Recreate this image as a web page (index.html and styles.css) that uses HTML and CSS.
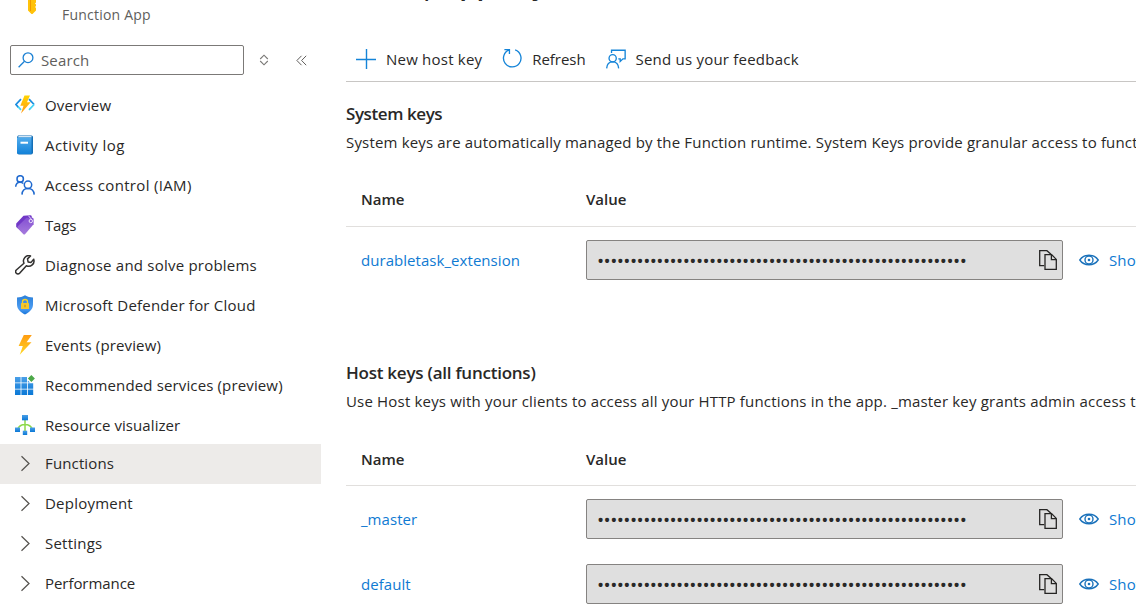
FILE: index.html
```html
<!DOCTYPE html>
<html lang="en">
<head>
<meta charset="utf-8">
<title>App keys</title>
<link rel="stylesheet" href="styles.css">
</head>
<body>
<svg class="defs" width="0" height="0" aria-hidden="true">
  <defs>
    <linearGradient id="blue" x1="0" y1="0" x2="0" y2="1"><stop offset="0" stop-color="#4a9fe8"/><stop offset="1" stop-color="#0a78d6"/></linearGradient>
    <linearGradient id="book" x1="0" y1="0" x2="0" y2="1"><stop offset="0" stop-color="#50abec"/><stop offset="1" stop-color="#1382d8"/></linearGradient>
    <linearGradient id="bolt" x1="0" y1="0" x2="0" y2="1"><stop offset="0" stop-color="#ff9c12"/><stop offset=".5" stop-color="#ffb818"/><stop offset="1" stop-color="#ffd928"/></linearGradient>
    <linearGradient id="flash" x1="0" y1="0" x2="0" y2="1"><stop offset="0" stop-color="#ffd400"/><stop offset="1" stop-color="#ff9b1a"/></linearGradient>
    <linearGradient id="tag" x1="0" y1="0" x2="0" y2="1"><stop offset="0" stop-color="#8450d2"/><stop offset="1" stop-color="#a67bdd"/></linearGradient>
    <linearGradient id="shield" x1="0" y1="0" x2="0" y2="1"><stop offset="0" stop-color="#2b80d9"/><stop offset=".7" stop-color="#4c9cf2"/><stop offset="1" stop-color="#1674da"/></linearGradient>
    <symbol id="copy" viewBox="0 0 20 22"><g fill="none" stroke="#252423" stroke-width="1.3"><path d="M6.200 16.600H1.700V1.700h7.200l4.100 3.600"/><path d="M7 5.600h6.600l4.700 4.800v10H7z"/><path d="M13.400 5.800v4.800h4.800"/></g></symbol>
    <symbol id="eye" viewBox="0 0 20 12"><g fill="none" stroke="#1b72bb" stroke-width="1.400"><path d="M.8 6C3 2.700 6.200 1.200 10 1.200S17 2.700 19.200 6C17 9.300 13.800 10.800 10 10.800S3 9.300.8 6z"/><circle cx="10" cy="6" r="4"/></g><circle cx="10" cy="6" r="1.300" fill="#1b72bb"/></symbol>
    <symbol id="chevron" viewBox="0 0 20 20"><path d="M6.500 3.200 14 10.500l-7.500 7.300" fill="none" stroke="#55534f" stroke-width="1.250"/></symbol>
  </defs>
</svg>
<div class="page">
  <aside class="sidebar">
    <div class="resource">
      <svg class="resource-icon" width="10" height="14" viewBox="0 0 10 14"><path d="M0 0h8v2.500l-1 1 1 1V6L7 7l1 1v2.500L4.500 14h-1L0 10.500z" fill="#ffc20a"/><path d="M2.500 0v11" stroke="#f29a00"/></svg>
      <span class="resource-type">Function App</span>
    </div>
    <div class="search-row">
      <div class="search">
        <svg width="16" height="16" viewBox="0 0 16 16" fill="none" stroke="#1b80d3" stroke-width="1.300"><circle cx="10" cy="5.700" r="4.900"/><path d="M6.500 9.300.6 15.200"/></svg>
        <span>Search</span>
      </div>
      <svg class="sort" width="10" height="12" viewBox="0 0 10 12" fill="none" stroke="#7a7876" stroke-width="1.100"><path d="M1.200 5 5 1.200 8.800 5M1.200 7 5 10.800 8.800 7"/></svg>
      <svg class="collapse" width="11" height="11" viewBox="0 0 11 11" fill="none" stroke="#605e5c"><path d="M5.500.8.9 5.500l4.600 4.700M10.200.8 5.600 5.500l4.600 4.700"/></svg>
    </div>
    <nav class="menu">
      <a class="item"><svg class="icon" viewBox="0 0 20 20"><g fill="none" stroke-width="1.800"><path d="M6 4.200.9 9.500 3.500 12.300M14 4.200l5.100 5.300" stroke="#1b8de0"/><path d="M3 11.700 6 14.800M19.100 9.500 14 14.800" stroke="#45d4f4"/></g><path d="M9.500.5h5.500l-3 6.700h3.700L6 18.500 8.500 10.800H5.300z" fill="url(#flash)"/></svg><span>Overview</span></a>
      <a class="item"><svg class="icon" viewBox="0 0 20 20"><path d="M3 .5h13.500q1.500 0 1.500 1.500v15.500q0 2-2 2H4q-2 0-2-2V2z" fill="#156fb6"/><path d="M3.500 1h13v1.600H3z" fill="#d5e7f5"/><path d="M2 2.600h14.500V19H4q-2 0-2-2z" fill="url(#book)"/><path d="M5.500 6.700h7.500v2H5.500z" fill="#fff"/></svg><span class="wider">Activity log</span></a>
      <a class="item"><svg class="icon" viewBox="0 0 20 20" fill="none" stroke="#1f69cf" stroke-width="1.500"><circle cx="5.200" cy="3.900" r="3.200"/><path d="M.7 11.700Q1 7.200 5 7.200q2 0 3.400 1.300"/><circle cx="13" cy="9.800" r="3.700"/><path d="M7 19.600q.3-6 6-6t6.200 6"/></svg><span class="roomy">Access control (IAM)</span></a>
      <a class="item"><svg class="icon" viewBox="0 0 20 20"><path d="M1.200 8.500 8.500.8 15.300.3q1.300 0 1.400 1.300L17 6 9 18.500 1.200 12z" fill="#7138c7"/><path d="M2.500 11.500 11.500 2.800h5.700q1.400 0 1.400 1.400v5L10 19.300q-.8.6-1.600 0L2.500 13z" fill="url(#tag)"/><circle cx="15.800" cy="6" r="1.700" fill="#8b5bd5" stroke="#fff" stroke-width=".8"/><path d="m13.500.8 2.500 3" stroke="#e8ddfa"/></svg><span class="tight">Tags</span></a>
      <a class="item"><svg class="icon" viewBox="0 0 20 20" fill="none" stroke="#323130" stroke-width="1.500" stroke-linejoin="round"><path d="M18.700 4.200a5.300 5.300 0 0 1-7.300 6.500L4.600 18.300a2.300 2.300 0 0 1-3.300-3.300L9 8.200A5.300 5.300 0 0 1 15.500.9l-3 3 .6 3 3 .5z"/></svg><span class="wide">Diagnose and solve problems</span></a>
      <a class="item"><svg class="icon" viewBox="0 0 20 20"><path d="M10 .3c2.600 1.800 5 2.200 8 2.200v7c0 5-4 7.900-8 10-4-2.100-8-5-8-10v-7c3 0 5.400-.4 8-2.200z" fill="url(#shield)"/><path d="M7.500 8.500V6.700q0-2.200 2.500-2.200t2.500 2.200v1.800" fill="none" stroke="#f7d027" stroke-width="1.300"/><rect x="6" y="8" width="8" height="6" rx=".6" fill="#f5c72c"/><path d="M10 9.700v2.500" stroke="#c29018" stroke-width="1.200"/></svg><span class="wide">Microsoft Defender for Cloud</span></a>
      <a class="item"><svg class="icon" viewBox="0 0 20 20"><path d="M8.800 0h8l-5.200 7.300h4.900L4.800 19.700l3-8.700H3.600z" fill="url(#bolt)"/></svg><span>Events (preview)</span></a>
      <a class="item"><svg class="icon" viewBox="0 0 20 20"><path d="M0 2h5.600v5.400H0zM6.400 2H12v5.400H6.400zM0 8.200h5.600v5.600H0zM6.400 8.200H12v5.600H6.400zM12.800 8.200h5.400v5.600h-5.400zM0 14.600h5.600V20H0zM6.400 14.600H12V20H6.400zM12.800 14.600h5.400V20h-5.400zM12.800 5.500 15 7.400h-2.200z" fill="url(#blue)"/><path d="m16.400 0 3.500 3.500L16.400 7l-3.500-3.500z" fill="#4ca848"/></svg><span>Recommended services (preview)</span></a>
      <a class="item"><svg class="icon" viewBox="0 0 20 20"><g fill="none" stroke="#8dd94b" stroke-width="1.500"><path d="M10 5v11M2.500 14.500Q4.500 9.500 10 9.500t7.500 5"/></g><g fill="url(#blue)"><rect x="7" y="0" width="6" height="5.300"/><rect x="0" y="12.500" width="5" height="4.500"/><rect x="15" y="12.500" width="5" height="4.500"/><rect x="7.800" y="15.700" width="4.400" height="4.300"/></g></svg><span class="fine">Resource visualizer</span></a>
    </nav>
    <nav class="menu groups">
      <a class="item selected"><svg class="icon"><use href="#chevron"/></svg><span>Functions</span></a>
      <a class="item"><svg class="icon"><use href="#chevron"/></svg><span class="wide">Deployment</span></a>
      <a class="item"><svg class="icon"><use href="#chevron"/></svg><span class="wide">Settings</span></a>
      <a class="item"><svg class="icon"><use href="#chevron"/></svg><span class="snug">Performance</span></a>
    </nav>
  </aside>
  <main class="main">
    <h1 class="title">| App keys</h1>
    <div class="toolbar">
      <a class="command"><svg width="20" height="20" viewBox="0 0 20 20"><path d="M0 10.500h20M10.500 0v20" stroke="#1484d8" stroke-width="1.400"/></svg><span class="wide">New host key</span></a>
      <a class="command"><svg width="20" height="21" viewBox="-.5 0 21 21" fill="none" stroke="#1484d8" stroke-width="1.400"><path d="M13.300 1.500A9.200 9.200 0 1 1 7.200 1.500M2 1.200h5.300v4.600"/></svg><span class="snug">Refresh</span></a>
      <a class="command"><svg width="20" height="20" viewBox="0 0 21 20" fill="none" stroke="#1484d8" stroke-width="1.400"><path d="M5.800 3.800V.8h14.300v9h-2.300L14.900 12.500V9.800h-2"/><circle cx="7" cy="9.200" r="3.800"/><path d="M.7 19.800Q1.200 13 7 13t6.300 6.800"/></svg><span class="wide">Send us your feedback</span></a>
    </div>
    <section class="section">
      <h2>System keys</h2>
      <p>System keys are automatically managed by the Function runtime. System Keys provide granular access to functions</p>
      <div class="row head"><span>Name</span><span>Value</span></div>
      <div class="row"><a class="link">durabletask_extension</a><div class="secret"><span class="dots">••••••••••••••••••••••••••••••••••••••••••••••••••••••••</span><svg width="20" height="22"><use href="#copy"/></svg></div><a class="show"><svg width="20" height="12"><use href="#eye"/></svg><span>Show</span></a></div>
    </section>
    <section class="section host">
      <h2>Host keys (all functions)</h2>
      <p>Use Host keys with your clients to access all your HTTP functions in the app. _master key grants admin access to</p>
      <div class="row head"><span>Name</span><span>Value</span></div>
      <div class="row"><a class="link">_master</a><div class="secret"><span class="dots">••••••••••••••••••••••••••••••••••••••••••••••••••••••••</span><svg width="20" height="22"><use href="#copy"/></svg></div><a class="show"><svg width="20" height="12"><use href="#eye"/></svg><span>Show</span></a></div>
      <div class="row"><a class="link">default</a><div class="secret"><span class="dots">••••••••••••••••••••••••••••••••••••••••••••••••••••••••</span><svg width="20" height="22"><use href="#copy"/></svg></div><a class="show"><svg width="20" height="12"><use href="#eye"/></svg><span>Show</span></a></div>
    </section>
  </main>
</div>
</body>
</html>
```
FILE: styles.css
```css
* { box-sizing: border-box; }
body {
  margin: 0;
  overflow: hidden;
  background: #fff;
  color: #292827;
  font: 15px/20px "Open Sans", "Noto Sans", sans-serif;
  letter-spacing: .14px;
}
svg { display: block; flex: none; }
.defs { position: absolute; }
.page { display: flex; width: 1136px; height: 608px; overflow: hidden; }

.wide { letter-spacing: .22px; }
.roomy { letter-spacing: .33px; }
.wider { letter-spacing: .42px; }
.fine { letter-spacing: .08px; }
.snug { letter-spacing: -.06px; }
.tight { letter-spacing: -.2px; }

.sidebar { width: 321px; flex: none; }
.resource { display: flex; height: 45px; padding-left: 28px; }
.resource-type { margin: 5px 0 0 24px; font-size: 14px; letter-spacing: .22px; color: #605e5c; }
.search-row { display: flex; align-items: center; height: 30px; padding-left: 10px; }
.search {
  display: flex;
  align-items: center;
  gap: 7px;
  width: 234px;
  height: 30px;
  padding-left: 7px;
  border: 1px solid #7b7977;
  border-radius: 2px;
  color: #605e5c;
}
.sort { margin-left: 15px; }
.collapse { margin-left: 27px; }
.menu { padding-top: 10px; }
.groups { padding-top: 0; margin-top: -1px; }
.item { display: flex; align-items: center; gap: 10px; height: 40px; padding-left: 15px; }
.groups .item { padding-bottom: 2px; }
.icon { width: 20px; height: 20px; }
.selected { background: #edebe9; }

.main { width: 790px; margin-left: 25px; flex: none; }
.title {
  margin: -42px 0 0;
  padding-left: 73px;
  height: 80px;
  font-size: 28px;
  line-height: 50px;
  font-weight: 600;
  letter-spacing: -.3px;
}
.toolbar {
  display: flex;
  gap: 20px;
  height: 44px;
  padding: 10px 0 0 10px;
  border-bottom: 1px solid #c8c6c4;
}
.command { display: flex; align-items: center; gap: 10px; height: 21px; }
.section { height: 259px; padding-top: 21px; white-space: nowrap; }
h2 {
  margin: 0;
  font-size: 17px;
  line-height: 22px;
  font-weight: 600;
  letter-spacing: -.42px;
}
.host h2 { letter-spacing: -.24px; }
p { margin: 7px 0 0; letter-spacing: .17px; }
.host p { letter-spacing: .18px; }
.row {
  display: grid;
  grid-template-columns: 225px 477px 1fr;
  align-items: center;
  height: 65px;
  padding: 3px 0 3px 15px;
}
.row.head {
  height: 54px;
  margin-top: 21px;
  padding: 0 0 1px 15px;
  border-bottom: 1px solid #e1dfdd;
  font-weight: 600;
  letter-spacing: 0;
}
.host .row.head { padding-bottom: 0; }
.link, .show { color: #0f7ad2; }
.link { letter-spacing: .05px; }
.secret {
  display: flex;
  align-items: center;
  justify-content: space-between;
  height: 40px;
  padding: 0 4px 0 10px;
  border: 1px solid #858381;
  border-radius: 2px;
  background: #dfdfdf;
}
.dots { padding-top: 3px; font-size: 19px; letter-spacing: -.55px; }
.show { display: flex; align-items: center; gap: 10px; padding-left: 16px; }
```
